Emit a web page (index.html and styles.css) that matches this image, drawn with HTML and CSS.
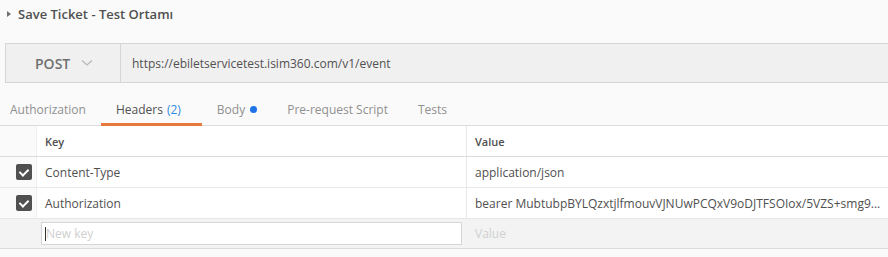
FILE: index.html
```html
<!DOCTYPE html>
<html lang="tr">
<head>
    <meta charset="UTF-8">
    <title>Save Ticket - Test Ortamı</title>
    <link rel="stylesheet" href="styles.css">
</head>
<body>
    <!-- Request title -->
    <div class="request-title">
        <span class="caret"></span>
        <span class="title-text">Save Ticket - Test Ortamı</span>
    </div>

    <!-- URL bar -->
    <div class="url-bar">
        <div class="method">
            <span>POST</span>
            <svg class="chevron" width="12" height="8" viewBox="0 0 12 8">
                <path d="M1 1.5 L6 6 L11 1.5" fill="none" stroke="#b8b8b8" stroke-width="1.3"/>
            </svg>
        </div>
        <div class="url">https://ebiletservicetest.isim360.com/v1/event</div>
    </div>

    <!-- Tabs -->
    <div class="tabs">
        <div class="tab">Authorization</div>
        <div class="tab active">Headers <span class="count">(2)</span></div>
        <div class="tab">Body <span class="dot"></span></div>
        <div class="tab">Pre-request Script</div>
        <div class="tab">Tests</div>
    </div>

    <!-- Headers table -->
    <div class="table">
        <div class="row head">
            <div class="check-cell"></div>
            <div class="cell key">Key</div>
            <div class="cell value">Value</div>
        </div>
        <div class="row">
            <div class="check-cell"><span class="checkbox"></span></div>
            <div class="cell key">Content-Type</div>
            <div class="cell value">application/json</div>
        </div>
        <div class="row">
            <div class="check-cell"><span class="checkbox"></span></div>
            <div class="cell key">Authorization</div>
            <div class="cell value">bearer MubtubpBYLQzxtjlfmouvVJNUwPCQxV9oDJTFSOIox/5VZS+smg9...</div>
        </div>
        <div class="row new-row">
            <div class="check-cell"></div>
            <div class="cell key"><div class="key-input"><span class="cursor"></span>New key</div></div>
            <div class="cell value placeholder">Value</div>
        </div>
    </div>
</body>
</html>
```

FILE: styles.css
```css
body {
    margin: 0;
    background-color: #fafafa;
    font-family: "Open Sans", sans-serif;
    color: #505050;
    width: 888px;
    height: 257px;
    overflow: hidden;
}
.request-title {
    display: flex;
    align-items: center;
    height: 28px;
    padding-left: 7px;
}
.caret {
    width: 0;
    height: 0;
    border-top: 3.5px solid transparent;
    border-bottom: 3.5px solid transparent;
    border-left: 4px solid #707070;
    margin-right: 7px;
}
.title-text {
    font-size: 13px;
    font-weight: 600;
    color: #505050;
}
.url-bar {
    display: flex;
    margin: 15px 0 0 5px;
    height: 38px;
    background-color: #f0f0f0;
    border: 1px solid #d6d6d6;
    border-right: none;
}
.method {
    display: flex;
    align-items: center;
    width: 115px;
    padding-left: 29px;
    box-sizing: border-box;
    border-right: 1px solid #d6d6d6;
    font-size: 14px;
    font-weight: 600;
    color: #707070;
}
.chevron {
    margin-left: 11px;
}
.url {
    display: flex;
    align-items: center;
    padding-left: 11px;
    font-size: 12px;
    color: #505050;
}
.tabs {
    display: flex;
    margin-top: 12px;
    height: 30px;
    border-bottom: 1px solid #dcdcdc;
}
.tab {
    display: flex;
    align-items: center;
    padding: 0 15px;
    font-size: 12px;
    color: #909090;
    border-bottom: 3px solid transparent;
    margin-bottom: -1px;
}
.tab:first-child {
    padding-left: 10px;
}
.tab.active {
    color: #505050;
    border-bottom-color: #e8793b;
}
.count {
    color: #2f8ae0;
    margin-left: 4px;
    margin-right: 6px;
}
.dot {
    width: 7px;
    height: 7px;
    border-radius: 50%;
    background-color: #1e74e6;
    margin-left: 5px;
}
.row {
    display: flex;
    height: 30px;
    border-bottom: 1px solid #e8e8e8;
}
.row.head {
    border-bottom-color: #dcdcdc;
}
.check-cell {
    width: 36px;
    display: flex;
    align-items: center;
    justify-content: center;
    padding-left: 12px;
    box-sizing: border-box;
}
.checkbox {
    width: 16px;
    height: 16px;
    border-radius: 2px;
    background-color: #505050;
    position: relative;
}
.checkbox::after {
    content: "";
    position: absolute;
    left: 5px;
    top: 3px;
    width: 4px;
    height: 7px;
    border: solid #fff;
    border-width: 0 2px 2px 0;
    transform: rotate(45deg);
}
.cell {
    display: flex;
    align-items: center;
    background-color: #fff;
    font-size: 12px;
    white-space: nowrap;
    overflow: hidden;
}
.cell.key {
    width: 431px;
    padding-left: 8px;
    border-left: 1px solid #efefef;
    border-right: 1px solid #e8e8e8;
    box-sizing: border-box;
}
.cell.value {
    flex: 1;
    padding-left: 8px;
}
.head .cell {
    font-size: 11px;
    font-weight: 600;
}
.new-row {
    height: 29px;
    background-color: #f3f3f3;
    border-bottom-color: #dcdcdc;
}
.new-row .cell {
    background-color: #f3f3f3;
    border-left-color: #f3f3f3;
    border-right-color: #f3f3f3;
}
.new-row .cell.key {
    padding-left: 4px;
}
.key-input {
    display: flex;
    align-items: center;
    width: 421px;
    height: 23px;
    box-sizing: border-box;
    border: 1px solid #d6d6d6;
    background-color: #fff;
    padding-left: 3px;
    color: #cfcfcf;
}
.cursor {
    width: 1px;
    height: 14px;
    background-color: #333;
}
.placeholder {
    color: #d0d0d0;
}
```
